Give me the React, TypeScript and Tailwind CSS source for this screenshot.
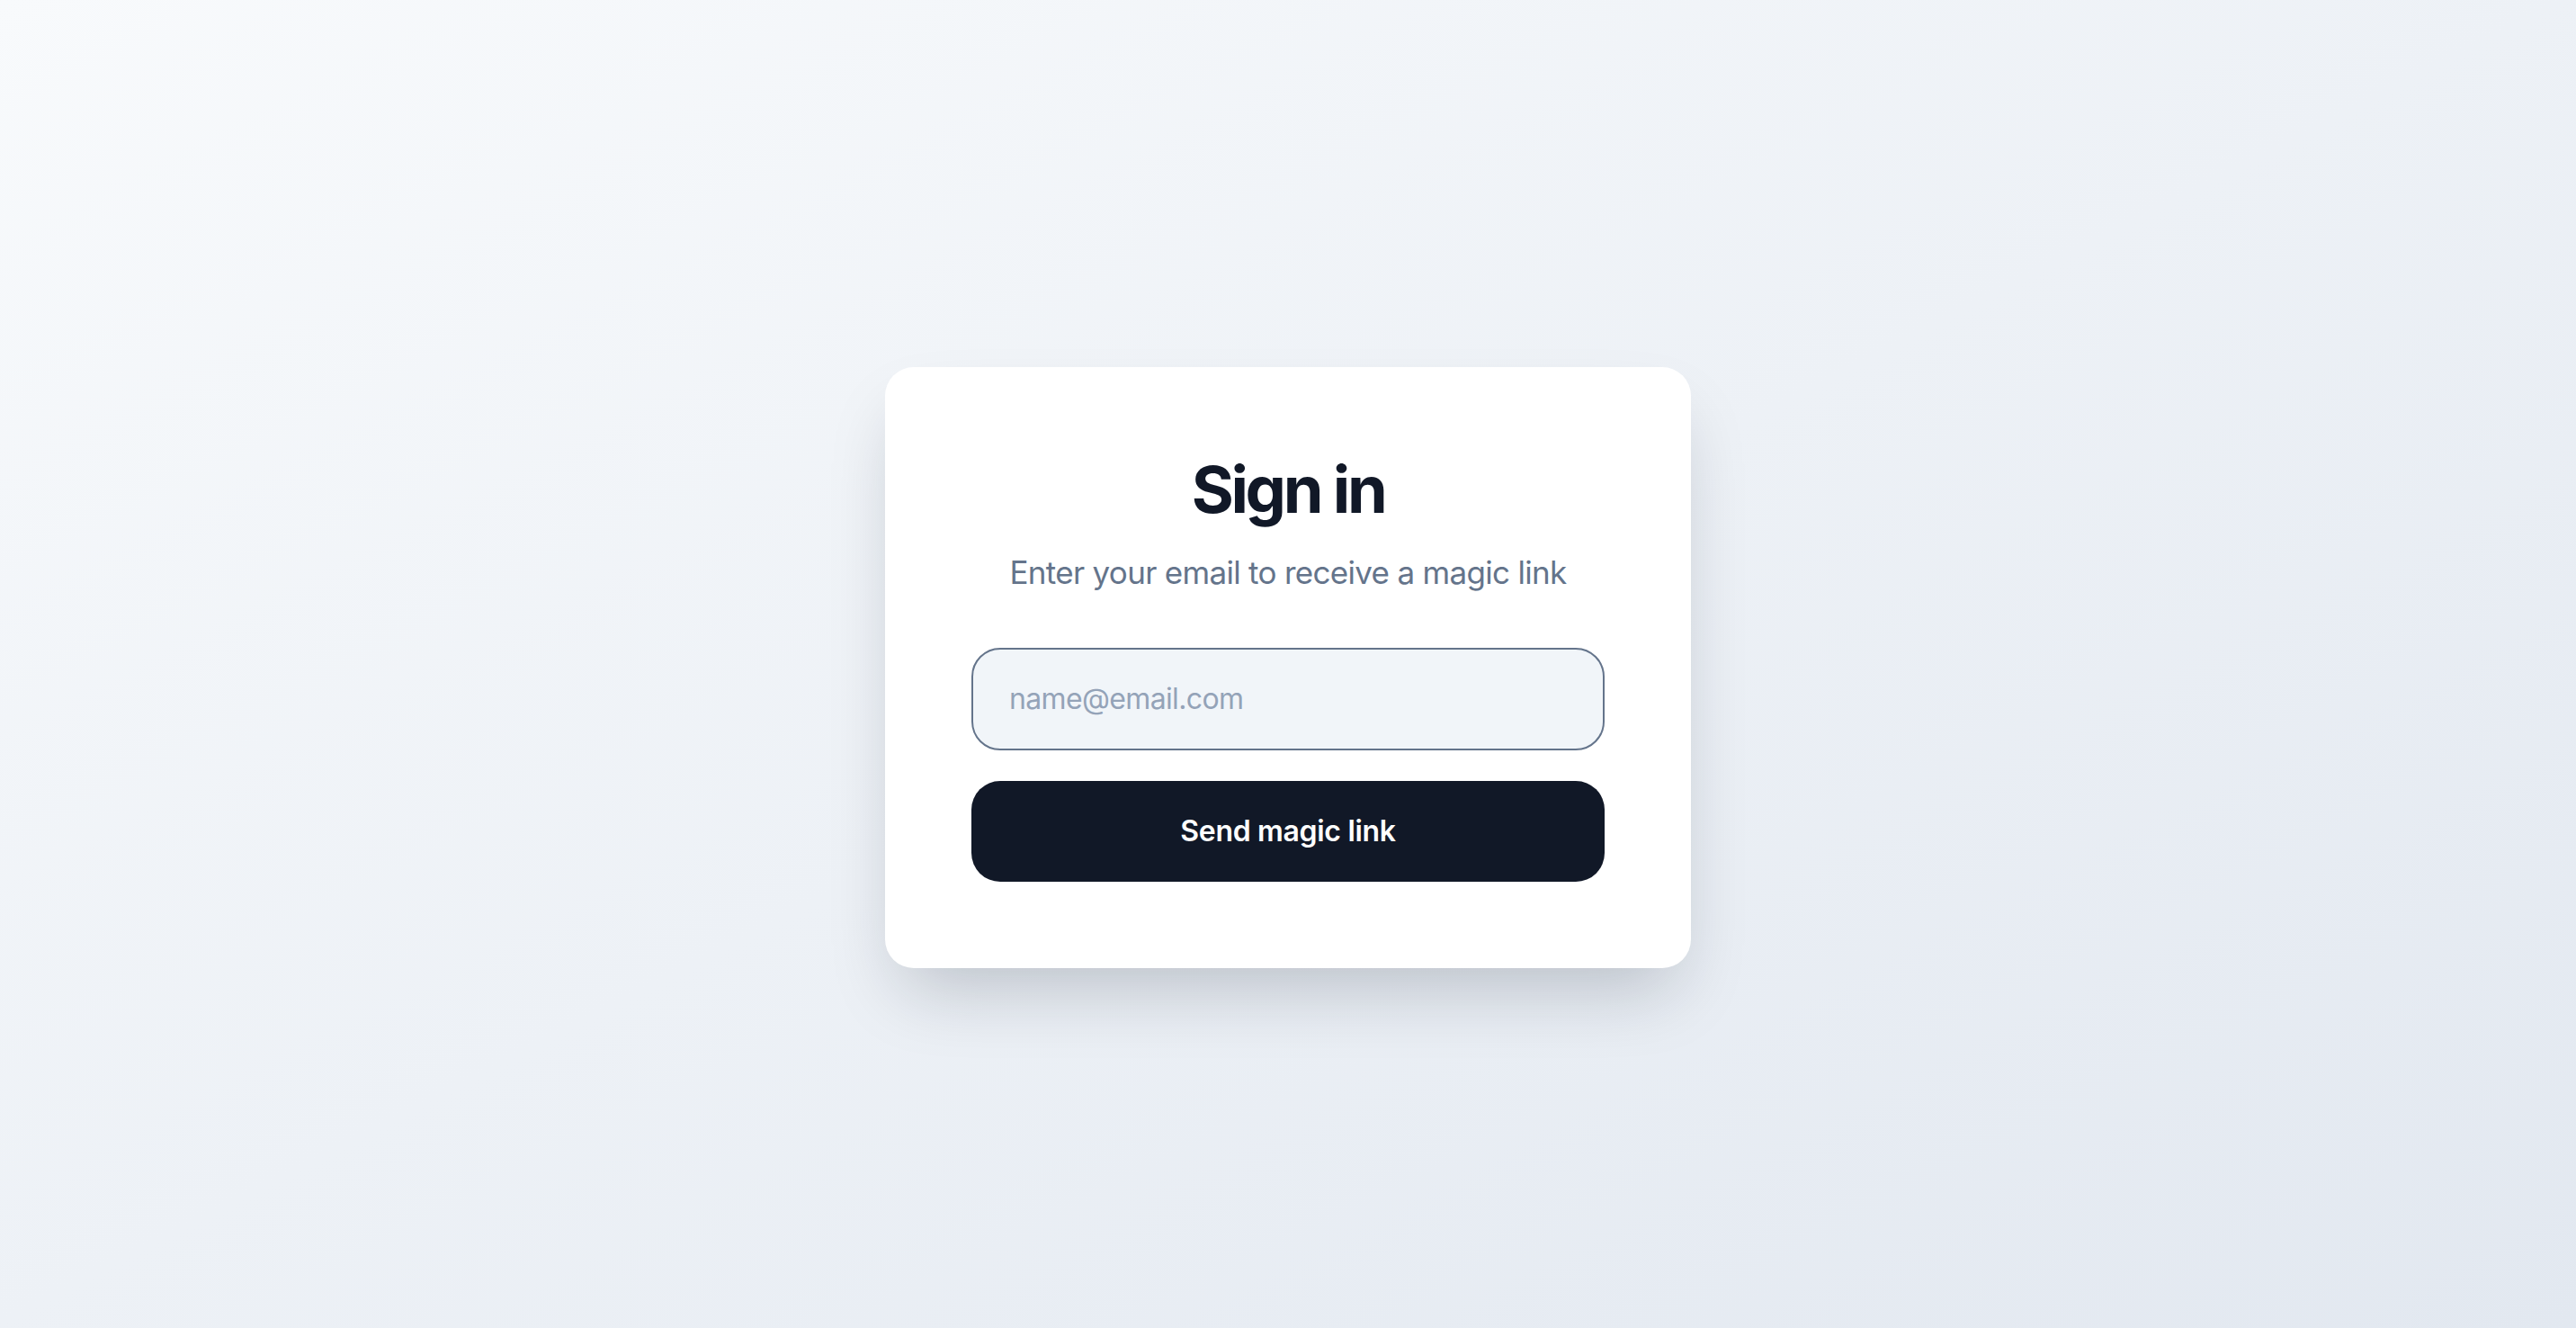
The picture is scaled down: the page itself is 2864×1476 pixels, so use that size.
export default function App() {
  return (
    <div
      className="min-h-screen w-full flex items-center justify-center pt-[7px] bg-gradient-to-br from-[#f8fafc] to-[#e2e8f0]"
      style={{ fontFamily: "Inter, 'Noto Sans', sans-serif" }}
    >
      <div className="w-[896px] rounded-[32px] bg-white p-[96px] shadow-[0_40px_80px_-20px_rgba(15,23,42,0.22)]">
        {/* Header */}
        <div className="flex flex-col items-center text-center">
          <h1 className="text-[72px] leading-[80px] font-bold tracking-[-0.047em] text-[#111827]">
            Sign in
          </h1>
          <p className="mt-6 text-[35px] leading-[56px] tracking-[-0.02em] text-[#64748b]">
            Enter your email to receive a magic link
          </p>
        </div>

        {/* Form */}
        <form className="mt-[56px] flex flex-col gap-[34px]" onSubmit={(e) => e.preventDefault()}>
          <input
            type="email"
            placeholder="name@email.com"
            className="h-[114px] w-full rounded-[32px] border-2 border-[#64748b] bg-[#f1f5f9] px-10 text-[32px] tracking-[-0.02em] text-[#0f172a] placeholder:text-[#94a3b8] outline-none"
          />
          <button
            type="submit"
            className="h-[112px] w-full rounded-[32px] bg-[#111827] text-[32px] font-semibold tracking-[-0.01em] text-white"
          >
            Send magic link
          </button>
        </form>
      </div>
    </div>
  );
}
